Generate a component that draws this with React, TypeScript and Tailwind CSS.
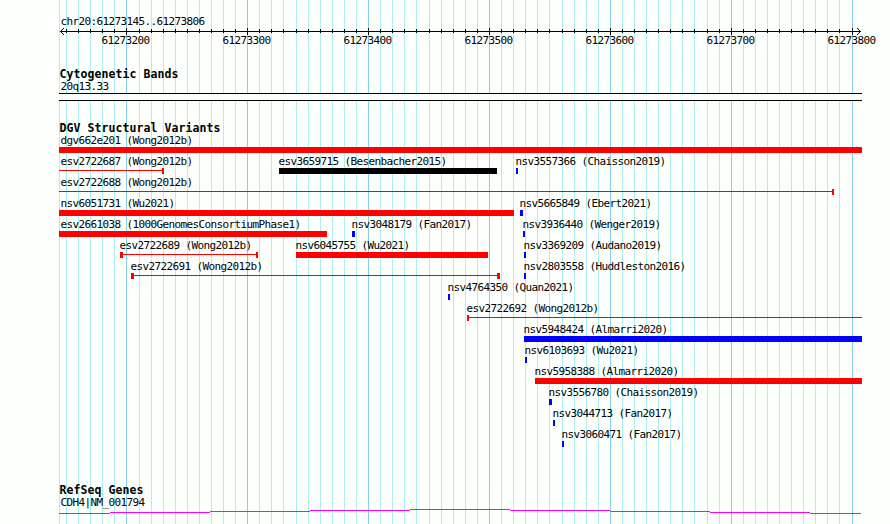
type Shape = "bar" | "range";

interface Feature {
  label: string;
  start: number;
  end: number;
  color: string;
  shape?: Shape;
  startCap?: number;
  endCap?: number;
}

const ORIGIN = 59;
const RED = "bg-[#ff0000]";
const BLUE = "bg-[#0000ff]";
const BLACK = "bg-black";

const majorLines = [126, 247, 368, 489, 610, 731, 852];
const gridLines = [
  59, 66, 78, 90, 102, 114, 126, 139, 151, 163, 175, 187, 199, 211, 223, 235, 247, 259, 271, 283, 296,
  308, 320, 332, 344, 356, 368, 380, 392, 404, 416, 429, 441, 453, 465, 477, 489, 501, 513, 525, 537,
  549, 562, 574, 586, 598, 610, 622, 634, 646, 658, 670, 682, 694, 707, 719, 731, 743, 755, 767, 779,
  791, 803, 815, 827, 839, 852,
];

const rows: Feature[][] = [
  [{ label: "dgv662e201 (Wong2012b)", start: 59, end: 862, color: RED }],
  [
    { label: "esv2722687 (Wong2012b)", start: 59, end: 164, color: RED, shape: "range", endCap: 2 },
    { label: "esv3659715 (Besenbacher2015)", start: 279, end: 497, color: BLACK },
    { label: "nsv3557366 (Chaisson2019)", start: 516, end: 518, color: BLUE },
  ],
  [{ label: "esv2722688 (Wong2012b)", start: 59, end: 834, color: RED, shape: "range", endCap: 2 }],
  [
    { label: "nsv6051731 (Wu2021)", start: 59, end: 514, color: RED },
    { label: "nsv5665849 (Ebert2021)", start: 520, end: 523, color: BLUE },
  ],
  [
    { label: "esv2661038 (1000GenomesConsortiumPhase1)", start: 59, end: 327, color: RED },
    { label: "nsv3048179 (Fan2017)", start: 352, end: 355, color: BLUE },
    { label: "nsv3936440 (Wenger2019)", start: 523, end: 525, color: BLUE },
  ],
  [
    { label: "esv2722689 (Wong2012b)", start: 120, end: 258, color: RED, shape: "range", startCap: 3, endCap: 2 },
    { label: "nsv6045755 (Wu2021)", start: 296, end: 488, color: RED },
    { label: "nsv3369209 (Audano2019)", start: 524, end: 526, color: BLUE },
  ],
  [
    { label: "esv2722691 (Wong2012b)", start: 131, end: 500, color: RED, shape: "range", startCap: 3, endCap: 3 },
    { label: "nsv2803558 (Huddleston2016)", start: 524, end: 526, color: BLUE },
  ],
  [{ label: "nsv4764350 (Quan2021)", start: 448, end: 450, color: BLUE }],
  [{ label: "esv2722692 (Wong2012b)", start: 467, end: 862, color: RED, shape: "range", startCap: 2 }],
  [{ label: "nsv5948424 (Almarri2020)", start: 524, end: 862, color: BLUE }],
  [{ label: "nsv6103693 (Wu2021)", start: 525, end: 527, color: BLUE }],
  [{ label: "nsv5958388 (Almarri2020)", start: 535, end: 862, color: RED }],
  [{ label: "nsv3556780 (Chaisson2019)", start: 549, end: 552, color: BLUE }],
  [{ label: "nsv3044713 (Fan2017)", start: 553, end: 555, color: BLUE }],
  [{ label: "nsv3060471 (Fan2017)", start: 562, end: 564, color: BLUE }],
];

const small = "block h-3 whitespace-pre text-[11px] leading-3 tracking-[-0.622px]";
const heading = "h-[13px] whitespace-pre text-[11.5px] font-bold leading-[13px] tracking-[0.077px]";

function Gridlines() {
  return (
    <div className="absolute inset-0">
      {gridLines.map((x) => (
        <div
          key={x}
          className={`absolute inset-y-0 w-px ${majorLines.includes(x) ? "bg-[#87ceeb]" : "bg-[#afeeee]"}`}
          style={{ left: x }}
        />
      ))}
    </div>
  );
}

function Ruler() {
  return (
    <svg className="block" width="804" height="7" viewBox="59 0 804 7" shapeRendering="crispEdges">
      <rect x="60" y="3" width="801" height="1" />
      {gridLines.slice(1).map((x) =>
        majorLines.includes(x) ? (
          <rect key={x} x={x} y="0" width="1" height="7" />
        ) : (
          <rect key={x} x={x} y="1" width="1" height="4" />
        ),
      )}
      {[1, 2, 3].map((d) => (
        <g key={d}>
          <rect x={60 + d} y={3 - d} width="1" height="1" />
          <rect x={60 + d} y={3 + d} width="1" height="1" />
          <rect x={860 - d} y={3 - d} width="1" height="1" />
          <rect x={860 - d} y={3 + d} width="1" height="1" />
        </g>
      ))}
    </svg>
  );
}

function Glyph({ feature }: { feature: Feature }) {
  const width = feature.end - feature.start;
  if (feature.shape !== "range") {
    return <div className={`h-1.5 ${feature.color}`} style={{ width }} />;
  }
  return (
    <div className="flex h-1.5" style={{ width }}>
      <div className={feature.color} style={{ width: feature.startCap ?? 0 }} />
      <div className={`mt-0.5 h-px flex-1 ${feature.color}`} />
      <div className={feature.color} style={{ width: feature.endCap ?? 0 }} />
    </div>
  );
}

function FeatureRow({ features }: { features: Feature[] }) {
  return (
    <div className="grid h-[21px]">
      {features.map((f) => (
        <div key={f.label} className="col-start-1 row-start-1" style={{ marginLeft: f.start - ORIGIN }}>
          <span className={`${small} ${f.start === ORIGIN ? "ml-[1.6px]" : "-ml-[0.4px]"}`}>{f.label}</span>
          <Glyph feature={f} />
        </div>
      ))}
    </div>
  );
}

function GeneLine() {
  return (
    <svg className="block" width="803" height="5" viewBox="59 509 803 5" shapeRendering="crispEdges" fill="#ff00ff">
      <rect x="59" y="513" width="51" height="1" />
      <rect x="110" y="512" width="100" height="1" />
      <rect x="210" y="511" width="100" height="1" />
      <rect x="310" y="510" width="100" height="1" />
      <rect x="410" y="509" width="100" height="1" />
      <rect x="510" y="510" width="100" height="1" />
      <rect x="610" y="511" width="100" height="1" />
      <rect x="710" y="512" width="100" height="1" />
      <rect x="810" y="513" width="51" height="1" />
    </svg>
  );
}

export default function App() {
  return (
    <div className="relative h-[524px] w-[890px] overflow-hidden bg-[#fdfffc] font-['DejaVu_Sans_Mono',monospace] text-black">
      <Gridlines />
      <main className="relative ml-[59px] w-[804px]">
        <header className="h-[68px] pt-4">
          <span className={`${small} ml-[1.4px]`}>chr20:61273145..61273806</span>
          <Ruler />
          <div className="-mr-10 ml-[42.6px] flex gap-[73px]">
            {[200, 300, 400, 500, 600, 700, 800].map((n) => (
              <span key={n} className={`${small} w-12`}>{`61273${n}`}</span>
            ))}
          </div>
        </header>
        <section className="h-[54px]">
          <h2 className={`${heading} ml-[0.4px]`}>Cytogenetic Bands</h2>
          <span className={`${small} ml-[1.4px]`}>20q13.33</span>
          <div className="h-2 w-[803px] border-y border-black bg-[#fdfffc]" />
        </section>
        <section className="h-[362px]">
          <h2 className={`${heading} ml-[0.4px]`}>DGV Structural Variants</h2>
          {rows.map((features) => (
            <FeatureRow key={features[0].label} features={features} />
          ))}
        </section>
        <section>
          <h2 className={`${heading} ml-[0.4px]`}>RefSeq Genes</h2>
          <span className={`${small} ml-[1.4px]`}>CDH4|NM_001794</span>
          <GeneLine />
        </section>
      </main>
    </div>
  );
}
